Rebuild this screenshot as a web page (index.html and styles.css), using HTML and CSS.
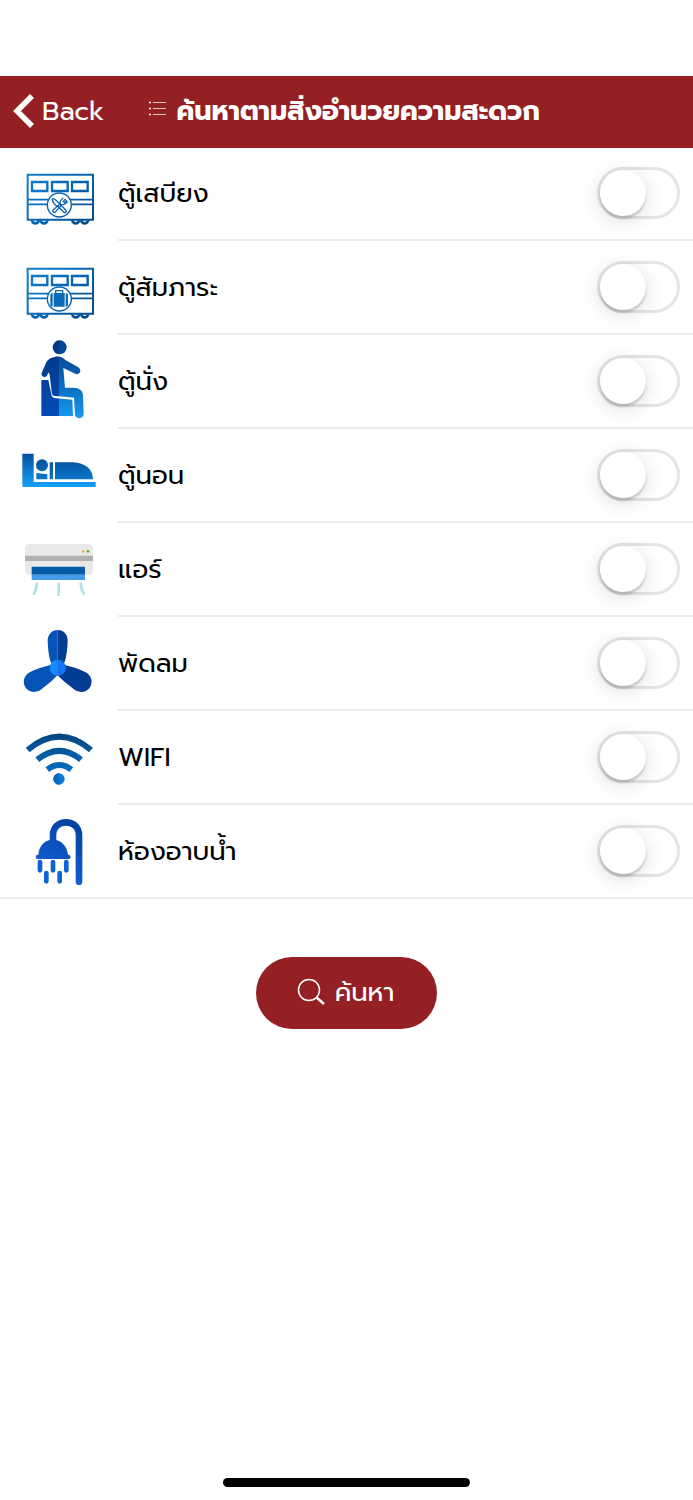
FILE: index.html
```html
<!DOCTYPE html>
<html lang="th">
<head>
<meta charset="utf-8">
<meta name="viewport" content="width=device-width, initial-scale=1">
<title>ค้นหาตามสิ่งอำนวยความสะดวก</title>
<link rel="stylesheet" href="styles.css">
</head>
<body>
<svg class="defs" aria-hidden="true">
  <defs>
    <linearGradient id="train" gradientUnits="userSpaceOnUse" x1="60" y1="40" x2="230" y2="195"><stop offset="0" stop-color="#117fce"/><stop offset=".5" stop-color="#0766b4"/><stop offset="1" stop-color="#064b8c"/></linearGradient>
    <linearGradient id="seatLeft" gradientUnits="userSpaceOnUse" x1="0" y1="15" x2="0" y2="243"><stop offset="0" stop-color="#033582"/><stop offset="1" stop-color="#034bb8"/></linearGradient>
    <linearGradient id="seatRight" gradientUnits="userSpaceOnUse" x1="0" y1="15" x2="0" y2="248"><stop offset="0" stop-color="#03408b"/><stop offset=".4" stop-color="#085ba9"/><stop offset="1" stop-color="#1599ee"/></linearGradient>
    <linearGradient id="bed" gradientUnits="userSpaceOnUse" x1="0" y1="40" x2="0" y2="141"><stop offset="0" stop-color="#07509b"/><stop offset="1" stop-color="#14a0fc"/></linearGradient>
    <linearGradient id="bedding" gradientUnits="userSpaceOnUse" x1="0" y1="58" x2="0" y2="118"><stop offset="0" stop-color="#07509b"/><stop offset="1" stop-color="#0c78cc"/></linearGradient>
    <linearGradient id="wifi" gradientUnits="userSpaceOnUse" x1="0" y1="40" x2="0" y2="195"><stop offset="0" stop-color="#03457e"/><stop offset="1" stop-color="#087bd8"/></linearGradient>
    <linearGradient id="shower" gradientUnits="userSpaceOnUse" x1="200" y1="28" x2="90" y2="225"><stop offset="0" stop-color="#033f9c"/><stop offset="1" stop-color="#1568e5"/></linearGradient>
    <clipPath id="leftHalf"><path d="M0 0H147V280H0Z"/></clipPath>
    <clipPath id="rightHalf"><path d="M147 0H300V280H147Z"/></clipPath>
    <g id="person">
      <circle cx="149" cy="37" r="21"/>
      <path d="M134 66C147 62 159 67 166 75L205 97C216 104 211 121 197 117L160 99L165 158H190C208 158 218 167 219 180L221 238C221 252 197 254 195 239L192 188L134 183C127 182 126 178 125 171L119 119L116 112L110 124C103 129 92 124 95 114L108 84C113 73 122 68 134 66Z"/>
      <path d="M94 135H115L124 178C125 186 130 190 138 190L187 194L189 243H94Z"/>
    </g>
    <g id="carriage" fill="none" stroke="url(#train)">
      <path stroke-width="6" d="M53 44H249V179H53Z"/>
      <path stroke-width="7" d="M66 66H112V93H66ZM126 66H173V93H126ZM186 66H233V93H186Z"/>
      <path stroke-width="5" d="M53 119H249M53 133H249"/>
      <path stroke-width="8" d="M66 181a10 9 0 0 0 20 0M92 181a10 9 0 0 0 20 0M187 181a10 9 0 0 0 20 0M214 181a10 9 0 0 0 20 0"/>
      <circle cx="148" cy="135" r="36" fill="#fff" stroke-width="4"/>
    </g>
  </defs>
</svg>

<header class="navbar">
  <button class="back" type="button">
    <svg class="back-icon" viewBox="0 0 22 36" aria-hidden="true"><path d="M19 3L4 18L19 33" fill="none" stroke="#fff" stroke-width="5.500"/></svg>
    <span>Back</span>
  </button>
  <h1 class="title">
    <svg class="list-icon" viewBox="0 0 18 16" aria-hidden="true"><path d="M4 2.500H17M4 8.500H17M4 14.500H17" stroke="#fff" stroke-opacity=".75"/><path d="M0 2.500H2M0 8.500H2M0 14.500H2" stroke="#fff" stroke-width="1.500"/></svg>
    <span>ค้นหาตามสิ่งอำนวยความสะดวก</span>
  </h1>
</header>

<main class="content">
  <ul class="list">
    <li class="row">
      <svg class="icon" viewBox="30 -39 234 279" aria-hidden="true"><use href="#carriage"/>
        <g fill="none" stroke="#0963ae" stroke-width="4" stroke-linejoin="round"><path d="M127 118C130 112 137 119 167 150C172 155 166 161 161 156L144 139C136 139 128 127 127 118Z"/><path d="M130 149L151 131C147 124 153 119 160 114M156 133C163 136 169 130 173 124M158 126L167 117M162 129L171 121M156 133L137 155C132 160 125 155 130 149"/></g></svg>
      <label for="dining">ตู้เสบียง</label><input class="switch" id="dining" type="checkbox">
    </li>
    <li class="row">
      <svg class="icon" viewBox="30 -39 234 279" aria-hidden="true"><use href="#carriage"/>
        <g fill="#096bb9"><path d="M131 117H164V158H131ZM121 122Q121 117 128 117V158Q121 158 121 153ZM167 117Q174 117 174 122V153Q174 158 167 158Z"/><path d="M137 117V110H158V117" fill="none" stroke="#096bb9" stroke-width="4"/></g></svg>
      <label for="luggage">ตู้สัมภาระ</label><input class="switch" id="luggage" type="checkbox">
    </li>
    <li class="row">
      <svg class="icon" viewBox="30 0 234 279" aria-hidden="true"><use href="#person" fill="url(#seatLeft)" clip-path="url(#leftHalf)"/><use href="#person" fill="url(#seatRight)" clip-path="url(#rightHalf)"/></svg>
      <label for="seat">ตู้นั่ง</label><input class="switch" id="seat" type="checkbox">
    </li>
    <li class="row">
      <svg class="icon" viewBox="30 -33 234 279" aria-hidden="true"><path d="M37 41H71V126H257V141H37Z" fill="url(#bed)"/><g fill="url(#bedding)"><circle cx="96" cy="76" r="18"/><path d="M79 99L112 103V118H79ZM119 67H129V118H119ZM135 67H183C218 67 248 81 249 118H135Z"/></g></svg>
      <label for="sleeper">ตู้นอน</label><input class="switch" id="sleeper" type="checkbox">
    </li>
    <li class="row">
      <svg class="icon" viewBox="30 -21 234 279" aria-hidden="true"><rect x="45" y="42" width="204" height="92" rx="13" fill="#e9e9e7"/><path d="M45 77H249V93H45Z" fill="#b1b1b1"/><path d="M65 110H225V134H65Z" fill="#075ca7"/><path d="M65 134H225V150H65Z" fill="#459de9"/><circle cx="220" cy="64" r="4" fill="#f4b35e"/><circle cx="234" cy="64" r="4" fill="#69a83b"/><path d="M81 158C80 175 76 185 70 194M146 158V198M212 158C213 174 217 185 223 194" fill="none" stroke="#afe2e4" stroke-width="8"/></svg>
      <label for="air">แอร์</label><input class="switch" id="air" type="checkbox">
    </li>
    <li class="row">
      <svg class="icon" viewBox="30 -9 234 279" aria-hidden="true"><path d="M143 30C126 30 112 44 113 64C114 88 116 107 122 126L143 144Z" fill="#0754b9"/><path d="M143 30C161 30 174 44 173 64C172 88 170 107 164 126L143 144Z" fill="#033c93"/><path d="M143 144L122 135C99 140 78 147 59 157C39 168 36 192 50 207C64 220 85 218 98 205C115 192 129 180 142 166Z" fill="#0754b9"/><path d="M143 144L164 135C187 140 208 147 227 157C247 168 250 192 236 207C222 220 201 218 188 205C171 192 157 180 143 166Z" fill="#033c93"/><circle cx="143" cy="143" r="24" fill="#1889ff"/><path d="M143 119A24 24 0 0 1 143 167Z" fill="#1673f3"/></svg>
      <label for="fan">พัดลม</label><input class="switch" id="fan" type="checkbox">
    </li>
    <li class="row">
      <svg class="icon" viewBox="30 -27 234 279" aria-hidden="true"><path d="M53 90Q148 10 243 90M82 119Q148 66 213 119M112 149Q148 121 184 149" fill="none" stroke="url(#wifi)" stroke-width="18"/><circle cx="147" cy="177" r="17" fill="#087bd8"/><path d="M147 160A17 17 0 0 0 147 194Z" fill="#0869bc"/></svg>
      <label for="wifi-option" lang="en">WIFI</label><input class="switch" id="wifi-option" type="checkbox">
    </li>
    <li class="row">
      <svg class="icon" viewBox="30 -15 234 279" aria-hidden="true"><path d="M129 95V76C129 24 207 24 207 76V215" fill="none" stroke="url(#shower)" stroke-width="20" stroke-linecap="round"/><path d="M85 134C87 107 105 89 129 89S171 107 174 134L180 136Q185 146 176 147H83Q74 146 79 136Z" fill="url(#shower)"/><path d="M90 156V181M129 156V181M169 156V181M109 189V214M149 189V214" fill="none" stroke="#0e62d9" stroke-width="14" stroke-linecap="round"/></svg>
      <label for="shower-option">ห้องอาบน้ำ</label><input class="switch" id="shower-option" type="checkbox">
    </li>
  </ul>
  <button class="search" type="button">
    <svg class="search-icon" viewBox="0 0 28 28" aria-hidden="true"><circle cx="12" cy="12" r="10.500" fill="none" stroke="#fff" stroke-width="1.500"/><path d="M19 19L27 26" stroke="#fff" stroke-width="2.500"/></svg>
    <span>ค้นหา</span>
  </button>
</main>
<div class="home-indicator"></div>
</body>
</html>
```
FILE: styles.css
```css
* { box-sizing: border-box; }
body {
  margin: 0;
  min-height: 100vh;
  padding: 76px 0 13px;
  display: flex;
  flex-direction: column;
  background: #fff;
  color: #000;
  font-family: Prompt, "Noto Sans Thai", "Noto Sans", sans-serif;
  font-size: 26px;
}
.defs { position: absolute; width: 0; height: 0; }
button { border: 0; font: inherit; color: #fff; cursor: pointer; }
.navbar {
  height: 72px;
  padding: 0 13px 2px;
  display: flex;
  align-items: center;
  gap: 45px;
  background: #942024;
  color: #fff;
}
.back { display: flex; align-items: center; gap: 7px; padding: 0; background: none; font-size: 27px; }
.back-icon { width: 22px; height: 36px; }
.title { margin: 0; display: flex; align-items: center; gap: 9px; font-size: 27px; font-weight: 700; white-space: nowrap; }
.list-icon { width: 18px; height: 16px; margin-bottom: 6px; }
.content { margin-top: -1px; display: flex; flex-direction: column; align-items: center; gap: 58px; }
.list { width: 100%; margin: 0; padding: 0; list-style: none; border-bottom: 2px solid #ebebeb; }
.row { height: 94px; padding: 0 13px 2px 20px; display: flex; align-items: center; background: linear-gradient(#ebebeb, #ebebeb) 118px 100% / 100% 2px no-repeat; }
.row:last-child { height: 92px; padding-bottom: 0; background: none; }
.icon { width: 78px; height: 93px; margin-right: 20px; flex: none; }
.row label { flex: 1; }
.switch {
  appearance: none;
  width: 83px;
  height: 52px;
  margin: 0;
  padding: 0;
  border: 3px solid #e5e5e5;
  border-radius: 26px;
  background: #fff;
  flex: none;
}
.switch::before {
  content: "";
  display: block;
  width: 46px;
  height: 46px;
  border-radius: 50%;
  background: #fff;
  box-shadow: 0 3px 2px rgba(0, 0, 0, .15), 0 4px 20px rgba(0, 0, 0, .15);
}
.switch:checked { background: #942024; }
.switch:checked::before { margin-left: auto; }
.search {
  width: 181px;
  height: 72px;
  padding: 0 2px 2px 0;
  border-radius: 36px;
  display: flex;
  align-items: center;
  justify-content: center;
  gap: 10px;
  background: #942024;
}
.search-icon { width: 28px; height: 28px; }
.home-indicator { width: 247px; height: 9px; margin: auto auto 0; border-radius: 5px; background: #000; }
```
